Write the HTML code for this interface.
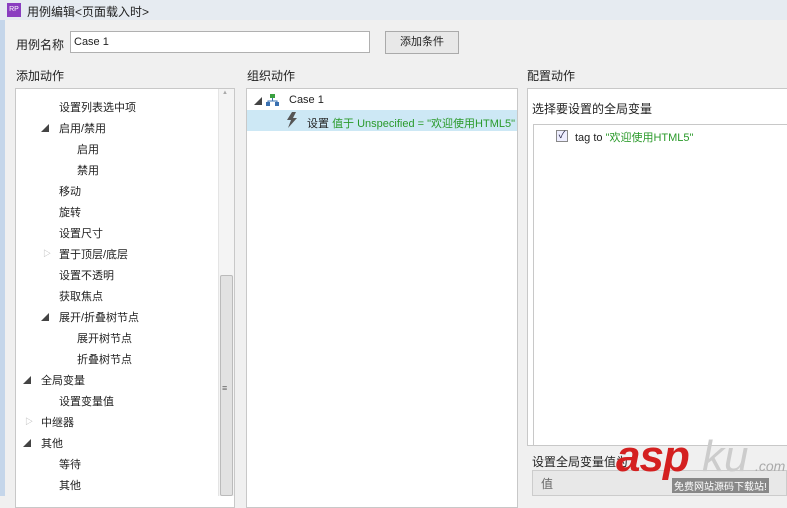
<!DOCTYPE html><html><head><meta charset="utf-8"><style>
*{margin:0;padding:0;box-sizing:border-box}
body{width:787px;height:496px;overflow:hidden;background:#f0f0f0;font-family:"Liberation Sans","Noto Sans CJK SC",sans-serif;font-size:11px;color:#222;position:relative}
.a{position:absolute;white-space:nowrap}
.box{position:absolute;background:#fff;border:1px solid #c8c8c8}
.g{color:#2a9a2a}
.t{position:absolute;font-size:8px;color:#444}
</style></head><body>
<div class="a" style="left:0;top:0;width:787px;height:20px;background:#e6ebf1"></div>
<div class="a" style="left:0;top:20px;width:5px;height:476px;background:#c5d6ea"></div>
<div class="a" style="left:7px;top:3px;width:14px;height:14px;background:#8a3ec0;color:#fff;font-size:7px;line-height:14px;text-align:center">RP</div>
<div class="a" style="left:27px;top:3px;font-size:12px">用例编辑&lt;页面载入时&gt;</div>
<div class="a" style="left:16px;top:36px;font-size:12px">用例名称</div>
<div class="box" style="left:70px;top:31px;width:300px;height:22px;border-color:#b0b0b0"></div>
<div class="a" style="left:74px;top:36px;font-size:11px">Case 1</div>
<div class="a" style="left:385px;top:31px;width:74px;height:23px;border:1px solid #aaa;background:#e8e8e8;text-align:center;line-height:21px">添加条件</div>
<div class="a" style="left:16px;top:67px;font-size:12px">添加动作</div>
<div class="a" style="left:247px;top:67px;font-size:12px">组织动作</div>
<div class="a" style="left:527px;top:67px;font-size:12px">配置动作</div>
<div class="box" style="left:15px;top:88px;width:220px;height:420px"></div>
<div class="a" style="left:218px;top:89px;width:16px;height:407px;background:#f4f4f4;border-left:1px solid #e4e4e4"></div>
<div class="a" style="left:220px;top:275px;width:13px;height:221px;background:#e2e2e2;border:1px solid #bbb;border-radius:2px"></div>
<div class="a" style="left:222px;top:383px;font-size:9px;color:#666">≡</div>
<div class="a" style="left:222px;top:90px;font-size:6px;color:#aaa">▲</div>
<div class="box" style="left:246px;top:88px;width:272px;height:420px"></div>
<div class="a" style="left:247px;top:110px;width:270px;height:21px;background:#cde8f5"></div>
<div class="t" style="left:254px;top:96px">◢</div>
<svg class="a" style="left:266px;top:94px" width="13" height="12"><rect x="4" y="0" width="5" height="4" fill="#3aa040"/><path d="M6.5 4v3M2 10V7h9v3" stroke="#3a70b0" fill="none"/><rect x="0" y="8" width="4" height="4" fill="#3a70b0"/><rect x="9" y="8" width="4" height="4" fill="#3a70b0"/></svg>
<div class="a" style="left:289px;top:94px">Case 1</div>
<svg class="a" style="left:286px;top:112px" width="12" height="16"><path d="M6 0L1 8h4l-3 8 9-10H7l3-6z" fill="#555"/></svg>
<div class="a" style="left:307px;top:115px">设置 <span class="g">值于 Unspecified = "欢迎使用HTML5"</span></div>
<div class="box" style="left:527px;top:88px;width:270px;height:358px"></div>
<div class="a" style="left:532px;top:100px;font-size:12px">选择要设置的全局变量</div>
<div class="box" style="left:533px;top:124px;width:260px;height:322px"></div>
<div class="a" style="left:556px;top:130px;width:12px;height:12px;border:1px solid #888;background:#eef;font-size:10px;line-height:10px;text-align:center;color:#224">✓</div>
<div class="a" style="left:575px;top:129px">tag to <span class="g">"欢迎使用HTML5"</span></div>
<div class="a" style="left:532px;top:453px;font-size:12px">设置全局变量值为</div>
<div class="a" style="left:532px;top:470px;width:255px;height:26px;background:#e8e8e8;border:1px solid #ccc"></div>
<div class="a" style="left:541px;top:475px;font-size:12px;color:#666">值</div>
<div class="a" style="left:616px;top:432px;font-size:44px;font-weight:bold;font-style:italic;color:#d42020;letter-spacing:-1px">asp</div>
<div class="a" style="left:702px;top:432px;font-size:44px;font-style:italic;color:#ccc">ku</div>
<div class="a" style="left:755px;top:458px;font-size:14px;font-style:italic;color:#aaa">.com</div>
<div class="a" style="left:672px;top:478px;font-size:10px;color:#fff;background:#888;padding:0 2px">免费网站源码下载站!</div>
<div id="tree"></div>
<div class="a" style="left:59px;top:99px">设置列表选中项</div>
<div class="t" style="left:41px;top:123px">◢</div><div class="a" style="left:59px;top:120px">启用/禁用</div>
<div class="a" style="left:77px;top:141px">启用</div>
<div class="a" style="left:77px;top:162px">禁用</div>
<div class="a" style="left:59px;top:183px">移动</div>
<div class="a" style="left:59px;top:204px">旋转</div>
<div class="a" style="left:59px;top:225px">设置尺寸</div>
<div class="t" style="left:43px;top:248px;color:#aaa">▷</div><div class="a" style="left:59px;top:246px">置于顶层/底层</div>
<div class="a" style="left:59px;top:267px">设置不透明</div>
<div class="a" style="left:59px;top:288px">获取焦点</div>
<div class="t" style="left:41px;top:312px">◢</div><div class="a" style="left:59px;top:309px">展开/折叠树节点</div>
<div class="a" style="left:77px;top:330px">展开树节点</div>
<div class="a" style="left:77px;top:351px">折叠树节点</div>
<div class="t" style="left:23px;top:375px">◢</div><div class="a" style="left:41px;top:372px">全局变量</div>
<div class="a" style="left:59px;top:393px">设置变量值</div>
<div class="t" style="left:25px;top:416px;color:#aaa">▷</div><div class="a" style="left:41px;top:414px">中继器</div>
<div class="t" style="left:23px;top:438px">◢</div><div class="a" style="left:41px;top:435px">其他</div>
<div class="a" style="left:59px;top:456px">等待</div>
<div class="a" style="left:59px;top:477px">其他</div>
</body></html>
